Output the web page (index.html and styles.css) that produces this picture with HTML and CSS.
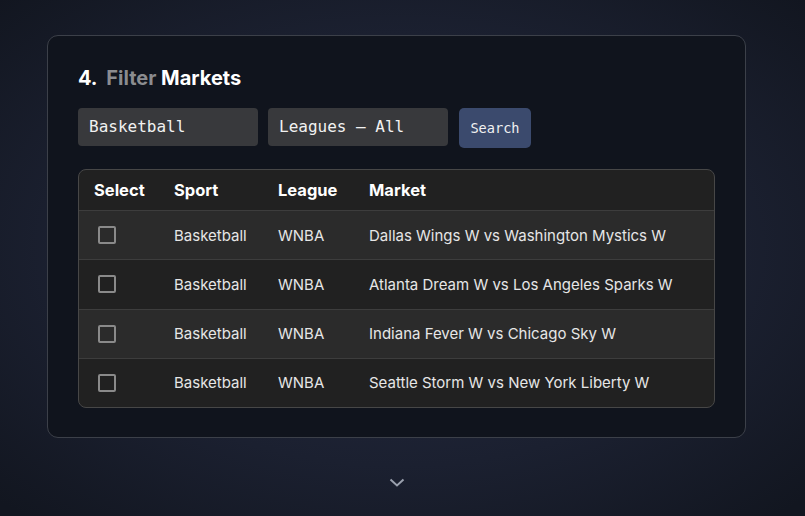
FILE: index.html
```html
<!DOCTYPE html>
<html>
<head>
<meta charset="utf-8">
<link rel="stylesheet" href="styles.css">
</head>
<body>
<main class="page">
  <section class="card">
    <h2 class="title"><span class="num">4.</span> <span class="muted">Filter</span> Markets</h2>
    <div class="filters">
      <div class="field">Basketball</div>
      <div class="field">Leagues — All</div>
      <button class="btn">Search</button>
    </div>
    <div class="table">
      <div class="row head">
        <div class="c1">Select</div><div class="c2">Sport</div><div class="c3">League</div><div class="c4">Market</div>
      </div>
      <div class="row alt">
        <div class="c1"><span class="box"></span></div><div class="c2">Basketball</div><div class="c3">WNBA</div><div class="c4">Dallas Wings W vs Washington Mystics W</div>
      </div>
      <div class="row">
        <div class="c1"><span class="box"></span></div><div class="c2">Basketball</div><div class="c3">WNBA</div><div class="c4">Atlanta Dream W vs Los Angeles Sparks W</div>
      </div>
      <div class="row alt">
        <div class="c1"><span class="box"></span></div><div class="c2">Basketball</div><div class="c3">WNBA</div><div class="c4">Indiana Fever W vs Chicago Sky W</div>
      </div>
      <div class="row last">
        <div class="c1"><span class="box"></span></div><div class="c2">Basketball</div><div class="c3">WNBA</div><div class="c4">Seattle Storm W vs New York Liberty W</div>
      </div>
    </div>
  </section>
  <div class="chev">
    <svg width="16" height="10" viewBox="0 0 16 10"><path d="M1.5 1.5 L8 7.5 L14.5 1.5" fill="none" stroke="#9aa0ad" stroke-width="2"/></svg>
  </div>
</main>
</body>
</html>
```
FILE: styles.css
```css
* { box-sizing: border-box; }
html, body { margin: 0; height: 100%; }
body {
  background: radial-gradient(ellipse 560px 360px at 400px 250px, #262c42 0%, #1b2030 60%, #121620 100%);
  font-family: Inter, "Noto Sans", sans-serif;
  color: #eee;
  overflow: hidden;
}
.page {
  width: 805px;
  height: 516px;
  padding-top: 35px;
  display: flex;
  flex-direction: column;
  align-items: flex-start;
}
.card {
  width: 699px;
  margin-left: 47px;
  background: #10141d;
  border: 1px solid #3c4049;
  border-radius: 11px;
  padding: 30px 30px 29px;
}
.title {
  margin: 0 0 18px;
  font-size: 20px;
  font-weight: 700;
  line-height: 24px;
  color: #fff;
}
.title .num { margin-right: 4px; }
.title .muted { color: #8b8c8f; }
.filters {
  display: flex;
  gap: 10px;
  align-items: flex-start;
  margin-bottom: 21px;
}
.field {
  width: 180px;
  height: 38px;
  background: #38393c;
  border-radius: 4px;
  font-family: "DejaVu Sans Mono", monospace;
  font-size: 16px;
  color: #f1f1f1;
  padding: 0 11px;
  line-height: 38px;
}
.btn {
  width: 72px;
  height: 40px;
  background: #3b4a6d;
  border: none;
  border-radius: 5px;
  font-family: "DejaVu Sans Mono", monospace;
  font-size: 13.6px;
  color: #f1f1f1;
  padding: 0;
  margin-left: 1px;
}
.table {
  width: 637px;
  border: 1px solid #474747;
  border-radius: 8px;
  background: #212121;
  overflow: hidden;
}
.row {
  display: flex;
  align-items: center;
  height: 49.25px;
  border-top: 1px solid #3d3d3d;
  font-size: 15px;
  color: #e6e6e6;
}
.row.head {
  height: 40px;
  border-top: none;
  font-weight: 700;
  font-size: 16.5px;
  color: #fff;
}
.row.alt { background: #2b2b2b; }
.c1 { width: 95px; padding-left: 15px; }
.c2 { width: 104px; }
.c3 { width: 91px; }
.c4 { flex: 1; }
.box {
  display: block;
  width: 18px;
  height: 18px;
  margin-left: 4px;
  border: 2px solid #8a8a8a;
  border-radius: 2px;
}
.chev {
  margin-top: 40px;
  margin-left: 389px;
  height: 10px;
  line-height: 0;
}
```
